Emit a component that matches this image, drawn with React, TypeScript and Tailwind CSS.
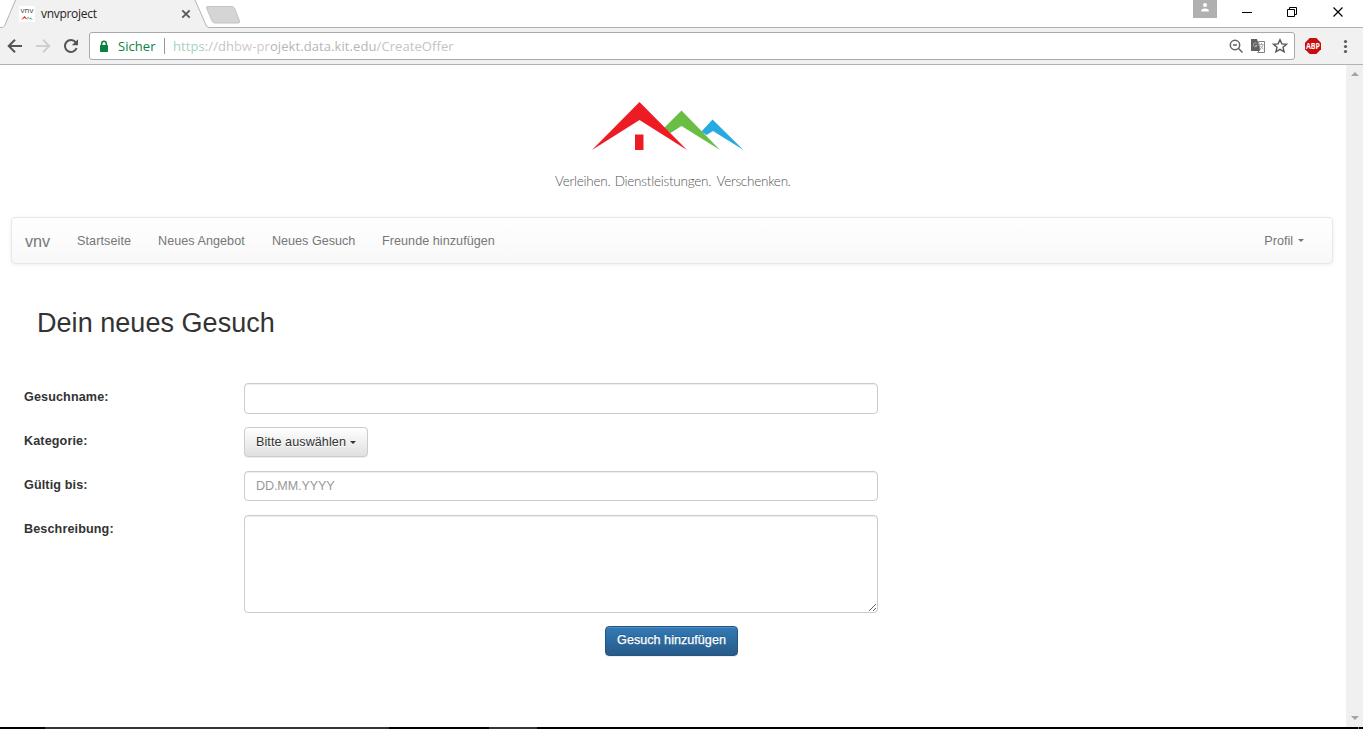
import React from 'react';

const font = 'font-["Liberation_Sans",Arial,sans-serif]';
const uiFont = 'font-["Open_Sans","Noto_Sans",sans-serif]';

function Favicon() {
  return (
    <span className="flex h-4 w-4 flex-col items-center bg-white">
      <span className="h-[10px] font-['Open_Sans',sans-serif] text-[8px] leading-[8px] tracking-[0.1px] text-[#444]">vnv</span>
      <svg width="12" height="5" viewBox="0 0 12 5" className="shrink-0">
        <path d="M0 4 3.5 0 7 4 3.5 2Z" fill="#ed1c24" />
        <path d="M5.8 2 7.3.8 9.6 4 7.5 2.5Z" fill="#6abd45" />
        <path d="M8.5 2.5 9.6 1.5 12 4Z" fill="#27aae1" />
      </svg>
    </span>
  );
}

function TabStrip() {
  return (
    <div className="flex h-7 items-start bg-white">
      <div className="relative h-7 w-[241px] shrink-0">
        <svg width="241" height="28" viewBox="0 0 241 28" className="absolute inset-0">
          <path d="M0 27.5H1C3 27.5 4 27 5 25L15 1Q15.5 0 16 0H194Q195 0 195.5 1L206 25Q207 27.5 209 27.5H241V28H0Z" fill="#f1f1f1" />
          <path d="M0 27.5H1C3 27.5 4 27 5 25L15.5 0M195 0 206 25Q207 27.5 209 27.5H241" fill="none" stroke="#b2b2b2" />
          <path d="M208 6.5H231.500Q233.500 6.5 234.500 8L239.500 21Q240 23 238.500 23H215Q213 23 212 21L206.500 8Q206 6.500 208 6.500Z" fill="#d5d5d5" stroke="#c3c3c3" />
        </svg>
        <div className="relative flex h-7 items-center pl-[19px]">
          <Favicon />
          <span className={`ml-[6px] w-[140px] text-[12px] leading-4 tracking-[-0.3px] text-[#222] ${uiFont}`}>vnvproject</span>
          <svg width="10" height="10" viewBox="0 0 10 10"><path d="m1.300 1.300 7.400 7.400m0-7.400L1.300 8.700" stroke="#555" strokeWidth="1.700" /></svg>
        </div>
      </div>
      <div className="flex h-7 grow items-start justify-end border-b border-[#b2b2b2]">
        <div className="flex h-[18px] w-6 items-center justify-center bg-[#b0b0b0] pb-1">
          <svg width="10" height="12" viewBox="0 0 10 12"><circle cx="5" cy="4" r="2" fill="white" /><path d="M1 10.500Q1 7.500 5 7.500T9 10.500Z" fill="white" /></svg>
        </div>
        <svg width="146" height="24" viewBox="0 0 146 24" fill="none" stroke="#000">
          <path d="M25 12.500H35" />
          <path d="M70.500 9.500H77.500V16.500H70.500ZM72.500 9.500V7.500H79.500V14.500H77.500" />
          <path d="m116.500 7.500 9 9m0-9-9 9" strokeWidth="1.200" />
        </svg>
      </div>
    </div>
  );
}

function Toolbar() {
  return (
    <div className="flex h-[37px] items-start border-b border-[#b2b2b2] bg-[#f1f1f1] pt-1">
      <svg width="89" height="28" viewBox="0 0 89 28" fill="none" strokeWidth="2" className="shrink-0">
        <path d="M22 14H9M15 7.700 8.700 14 15 20.300" stroke="#555" />
        <path d="M36 14H49M43 7.700 49.300 14 43 20.300" stroke="#cfcfcf" />
        <path d="M75.700 10.300A6 6 0 1 0 76.600 16" stroke="#555" />
        <path d="M78 7.200V13.300H71.800Z" fill="#555" />
      </svg>
      <div className="flex h-7 w-[1206px] shrink-0 items-center rounded-[3px] border border-[#a9a9a9] bg-white">
        <svg width="10" height="13" viewBox="0 0 10 13" className="ml-[9px]">
          <path d="M2.700 5V3.500a2.300 2.300 0 0 1 4.600 0V5" fill="none" stroke="#0b8043" strokeWidth="1.500" />
          <rect x="1" y="5" width="8" height="7" rx=".7" fill="#0b8043" />
        </svg>
        <span className={`ml-[9px] w-[46px] whitespace-nowrap text-[13px] leading-4 tracking-[0.05px] text-[#0b8043] ${uiFont}`}>Sicher</span>
        <span className="h-4 w-px bg-[#999]" />
        <span className={`ml-2 whitespace-nowrap text-[13px] leading-4 tracking-[0.08px] text-[#c4c4c4] ${uiFont}`}>
          <span className="text-[#a9d1be]">https</span>://dh<span className="text-[#d3c8cc]">bw-pr</span><span className="text-[#b6b6b6]">ojekt.data.kit.edu</span>/CreateOffer
        </span>
        <svg width="67" height="24" viewBox="0 0 67 24" className="-mr-px ml-auto" fill="none">
          <circle cx="7" cy="11" r="4.700" stroke="#626262" strokeWidth="1.500" />
          <path d="M5 11h4M10.300 14.300l4.200 4.200" stroke="#626262" strokeWidth="1.500" />
          <path d="M23 5h6l3.500 12H23Z" fill="#606060" />
          <path d="M30.500 7.500h6v11h-7l2.500-2.500Z" fill="white" stroke="#808080" />
          <path d="M28.700 9.500a2 2 0 1 0 .5 2H27M31.500 10.500h4M33.500 9v1.500M35 11q-1 3-3 4M32.500 12l3 3.500" stroke="#aaa" />
          <path d="m52 5.700 1.900 4.200 4.600.4-3.500 3 1.100 4.500-4.100-2.400-4.100 2.400 1.100-4.500-3.500-3 4.600-.4Z" stroke="#555" strokeWidth="1.400" />
        </svg>
      </div>
      <svg width="68" height="28" viewBox="0 0 68 28">
        <path d="M14.700 6h6.600l4.700 4.700v6.600L21.300 22h-6.600L10 17.300v-6.600Z" fill="#c70d0d" />
        <text x="18" y="17" textAnchor="middle" textLength="14" lengthAdjust="spacingAndGlyphs" fill="white" fontFamily="Open Sans" fontWeight="700" fontSize="8">ABP</text>
        <g fill="#5a5a5a"><circle cx="50.500" cy="9.500" r="1.600" /><circle cx="50.500" cy="14.500" r="1.600" /><circle cx="50.500" cy="19.500" r="1.600" /></g>
      </svg>
    </div>
  );
}

function Logo() {
  return (
    <header className="flex h-[152px] flex-col pt-9">
      <svg width="154" height="51" viewBox="591 101 154 51" className="ml-[591px]">
        <path d="m701.500 131.500 11-12L743.500 150 713 131 706.500 135Z" fill="#27aae1" />
        <path d="m664 128 17.500-17.500L720 150l-38.500-24-11 7Z" fill="#6abd45" />
        <path d="m592 150 47.500-48L687 150l-47.500-30Z" fill="#ed1c24" />
        <path d="M635 134.500h8.500V150H635Z" fill="#ed1c24" />
      </svg>
      <div className="ml-[555px] mt-[19px] whitespace-nowrap font-['Lato',sans-serif] text-[13.5px] font-light leading-5 tracking-[-0.25px] text-[#555]">
        Verleihen. <span className="ml-px">Dienstleistungen.</span> <span className="ml-[2px]">Verschenken.</span>
      </div>
    </header>
  );
}

function Caret() {
  return <span className="inline-block border-x-[3px] border-t-[3px] border-x-transparent border-t-current" />;
}

function Navbar() {
  return (
    <nav className="ml-[11px] flex h-[47px] w-[1322px] items-center rounded-[4px] border border-[#e7e7e7] bg-linear-to-b from-white to-[#f8f8f8] pt-px text-[12.6px] text-[#777] shadow-[0_1px_4px_rgba(0,0,0,0.075)]">
      <a className="w-[52px] pt-px pl-[13px] text-[16.2px]">vnv</a>
      <a className="ml-[13px] w-[81px] tracking-[0.1px]">Startseite</a>
      <a className="w-[114px] tracking-[0.05px]">Neues Angebot</a>
      <a className="w-[110px]">Neues Gesuch</a>
      <a className="tracking-[0.05px]">Freunde hinzufügen</a>
      <a className="mr-7 ml-auto flex items-center gap-[5px]">Profil <Caret /></a>
    </nav>
  );
}

const field = 'block w-[634px] rounded-[4px] border border-[#ccc] bg-white px-[11px] text-[12.6px] text-[#555] shadow-[inset_0_1px_1px_rgba(0,0,0,0.075)] outline-none placeholder:text-[#999]';

function Row({ label, children }: { label: string; children: React.ReactNode }) {
  return (
    <div className="flex items-start">
      <label className="w-[220px] pt-[7px] text-[12.6px] font-bold leading-[15px] tracking-[0.12px] text-[#333]">{label}</label>
      {children}
    </div>
  );
}

function OfferForm() {
  return (
    <form className="ml-6 flex flex-col">
      <h2 className="ml-[13px] mt-[42px] h-[77px] text-[27px] leading-[34px] tracking-[0.04px] text-[#333]">Dein neues Gesuch</h2>
      <div className="flex flex-col gap-[14px]">
        <div className="h-[30px]"><Row label="Gesuchname:"><input className={`${field} h-[31px]`} /></Row></div>
        <Row label="Kategorie:">
          <button type="button" className="flex h-[30px] w-[124px] items-center gap-1 rounded-[4px] border border-[#ccc] bg-linear-to-b from-white to-[#e0e0e0] pl-[11px] text-[12.6px] tracking-[0.07px] whitespace-nowrap text-[#333] shadow-[0_1px_1px_rgba(0,0,0,0.075)] [text-shadow:0_1px_0_#fff]">
            Bitte auswählen<Caret />
          </button>
        </Row>
        <Row label="Gültig bis:"><input className={`${field} h-[30px] tracking-[-0.12px]`} placeholder="DD.MM.YYYY" /></Row>
        <Row label="Beschreibung:"><textarea className={`${field} h-[98px] resize`} /></Row>
      </div>
      <button type="button" className="ml-[581px] mt-[13px] h-[30px] w-[133px] rounded-[4px] border border-[#245580] bg-linear-to-b from-[#337ab7] to-[#265a88] pb-[2px] text-[12.6px] tracking-[0.02px] text-white shadow-[inset_0_1px_0_rgba(255,255,255,0.15),0_1px_1px_rgba(0,0,0,0.075)] [-webkit-text-stroke:0.25px_white] [text-shadow:0_-1px_0_rgba(0,0,0,0.2)]">Gesuch hinzufügen</button>
    </form>
  );
}

export default function App() {
  return (
    <div className={`flex h-[729px] w-[1363px] flex-col overflow-hidden bg-white ${font}`}>
      <TabStrip />
      <Toolbar />
      <div className="flex h-[662px] shrink-0">
        <main className="w-[1346px]">
          <Logo />
          <Navbar />
          <OfferForm />
        </main>
        <aside className="flex w-[17px] flex-col items-center justify-between bg-[#f0f0f0] pt-[7px] pb-[7px]">
          <svg width="8" height="4" viewBox="0 0 8 4"><path d="m0 4 4-4 4 4Z" fill="#a3a3a3" /></svg>
          <svg width="8" height="4" viewBox="0 0 8 4"><path d="m0 0 4 4 4-4Z" fill="#a3a3a3" /></svg>
        </aside>
      </div>
      <div className="flex h-0.5 shrink-0 bg-black">
        <span className="ml-[45px] w-[344px] bg-[#333]" />
        <span className="ml-[100px] w-[48px] bg-[#34353a]" />
        <span className="mr-1 ml-auto w-px bg-[#777]" />
      </div>
    </div>
  );
}
